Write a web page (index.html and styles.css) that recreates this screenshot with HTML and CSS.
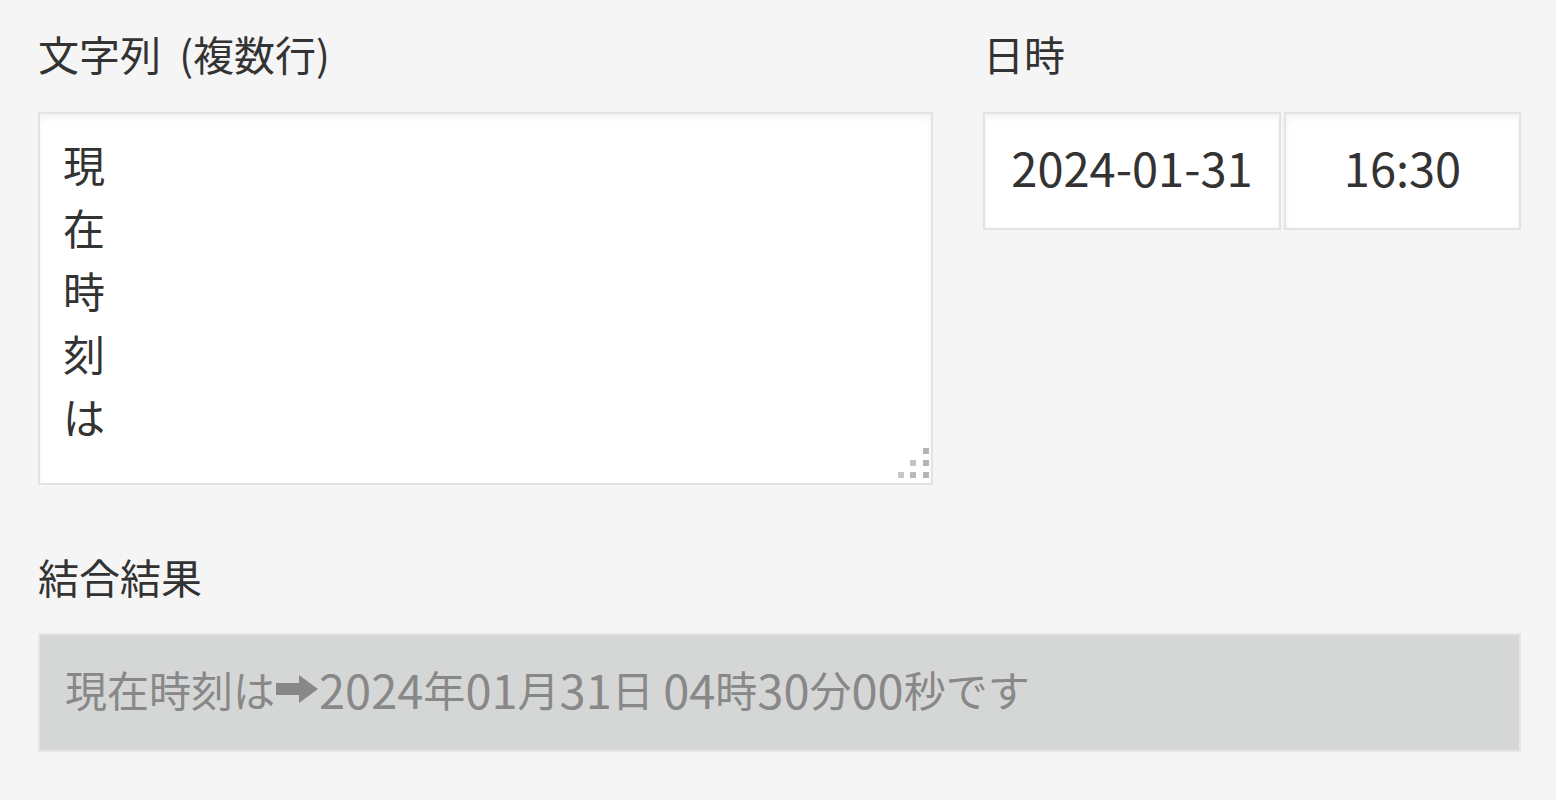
FILE: index.html
```html
<!DOCTYPE html>
<html lang="ja">
<head>
  <meta charset="UTF-8" />
  <title>フォーム</title>
  <link rel="stylesheet" href="styles.css">
</head>
<body>

<div class="page">
  <div class="row">
    <div class="field field-text">
      <div class="label">文字列 (複数行)</div>
      <div class="textarea-wrap">
        <textarea class="textarea">現
在
時
刻
は</textarea>
        <svg class="grip" width="32" height="32" viewBox="0 0 32 32">
          <rect x="26" y="2" width="6" height="6" fill="#b4b4b4"/>
          <rect x="13" y="14" width="6" height="6" fill="#c4c4c4"/>
          <rect x="26" y="14" width="6" height="6" fill="#b4b4b4"/>
          <rect x="1" y="26" width="6" height="6" fill="#c8c8c8"/>
          <rect x="13" y="26" width="6" height="6" fill="#b8b8b8"/>
          <rect x="26" y="26" width="6" height="6" fill="#b4b4b4"/>
        </svg>
      </div>
    </div>
    <div class="field field-date">
      <div class="label">日時</div>
      <div class="datetime">
        <input class="input input-date" type="text" value="2024-01-31">
        <input class="input input-time" type="text" value="16:30">
      </div>
    </div>
  </div>

  <div class="field field-result">
    <div class="label">結合結果</div>
    <div class="result"><span>現在時刻は</span><svg class="arrow" width="42" height="30" viewBox="0 0 42 30"><path d="M0 9 H23 V1 L42 15 L23 29 V21 H0 Z" fill="#888"/></svg><span class="num">2024</span>年<span class="num">01</span>月<span class="num">31</span>日 <span class="num">04</span>時<span class="num">30</span>分<span class="num">00</span>秒です</div>
  </div>
</div>

</body>
</html>
```

FILE: styles.css
```css
body {
  font-family: "Noto Sans CJK JP", "Noto Sans", sans-serif;
  background-color: #f5f5f5;
  color: #333;
  margin: 0;
}
.page {
  padding: 29px 35px 0 38px;
}
.row {
  display: flex;
  gap: 50px;
}
.field-text {
  width: 895px;
}
.field-date {
  width: 538px;
}
.label {
  font-size: 41px;
  line-height: 48px;
  margin-bottom: 35px;
  color: #333;
  word-spacing: 9px;
}
.textarea-wrap {
  position: relative;
}
.textarea {
  display: block;
  box-sizing: border-box;
  width: 100%;
  height: 373px;
  margin: 0;
  padding: 18px 23px;
  border: 2px solid #e3e3e3;
  background: #fff;
  box-shadow: inset 0 4px 6px #f3f3f3;
  font-family: inherit;
  font-size: 42px;
  line-height: 63px;
  color: #333;
  resize: none;
  outline: none;
}
.grip {
  position: absolute;
  right: 4px;
  bottom: 7px;
}
.datetime {
  display: flex;
  gap: 3px;
}
.input {
  box-sizing: border-box;
  height: 118px;
  margin: 0;
  padding: 0 0 10px;
  border: 2px solid #e3e3e3;
  background: #fff;
  box-shadow: inset 0 4px 6px #f3f3f3;
  font-family: inherit;
  font-size: 47px;
  color: #333;
  text-align: center;
  outline: none;
}
.input-date {
  width: 298px;
}
.input-time {
  width: 237px;
}
.field-result {
  margin-top: 67px;
}
.field-result .label {
  margin-bottom: 33px;
}
.result {
  box-sizing: border-box;
  width: 1483px;
  height: 119px;
  padding: 0 25px 8px;
  border: 2px solid #e6e6e6;
  background-color: #d5d7d6;
  color: #888;
  font-size: 42px;
  display: flex;
  align-items: center;
  white-space: pre;
}
.num {
  font-size: 47px;
}
.arrow {
  margin: 0 1px;
}
```
